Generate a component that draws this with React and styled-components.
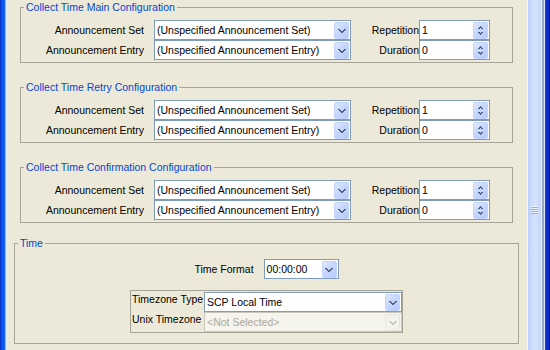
import React from "react";
import styled, { createGlobalStyle } from "styled-components";

const GlobalStyle = createGlobalStyle`
  html, body {
    margin: 0;
    padding: 0;
    background: #ece9d8;
  }
  body {
    font-family: "Liberation Sans", Arial, sans-serif;
    font-size: 10.5px;
    color: #000;
  }
`;

const Window = styled.div`
  width: 550px;
  height: 350px;
  display: flex;
  overflow: hidden;
  background: #ece9d8;
`;

const LeftFrame = styled.div`
  width: 7px;
  flex: none;
  background: linear-gradient(
    to right,
    #0a32c8 0 1px,
    #0656ec 1px 4px,
    #1b66f0 4px 5px,
    #8fb0f6 5px 6px,
    #e4ecfd 6px 7px
  );
`;

const RightFrame = styled.div`
  width: 5px;
  flex: none;
  background: linear-gradient(to right, #1240d8 0 1px, #0a2cc4 1px 4px, #001a9e 4px);
`;

const Content = styled.div`
  flex: 1;
  display: flex;
  flex-direction: column;
  min-width: 0;
`;

const Track = styled.div`
  width: 18px;
  flex: none;
  display: flex;
  background: #f6f8fd;
  padding-left: 1px;
  box-sizing: border-box;
`;

const Thumb = styled.div`
  width: 13px;
  display: flex;
  flex-direction: column;
  align-items: center;
  background: linear-gradient(to right, #bacefb 0%, #cddcfd 30%, #d6e2fe 60%, #c2d4fc 100%);
  border-right: 1px solid #e8effe;
`;

const Grip = styled.div`
  margin-top: 206px;
  width: 7px;
  height: 8px;
  background: repeating-linear-gradient(to bottom, #f0f5ff 0 1px, #8cacf4 1px 2px);
`;

const Rail = styled.div`
  width: 3px;
  background: linear-gradient(to right, #98a6c6 0 2px, #dfe7fb 2px 3px);
`;

const Group = styled.fieldset`
  margin: ${p => p.$first ? "0" : p.$gap + "px"} ${p => p.$right}px 0 ${p => p.$left}px;
  padding: ${p => p.$pt}px 0 ${p => p.$pb}px 0;
  border: 1px solid #a6a59a;
  min-width: 0;
`;

const Legend = styled.legend`
  margin-left: 3px;
  padding: 0 2px;
  line-height: 15px;
  height: 15px;
  color: #0046d5;
`;

const ConfigGrid = styled.div`
  display: grid;
  grid-template-columns: 133px 197px 68px 71px;
  grid-auto-rows: 20px;
  align-items: center;
`;

const Label = styled.span`
  text-align: ${p => p.$align || "right"};
  padding-right: ${p => p.$pr || 0}px;
  padding-left: ${p => p.$pl || 0}px;
  white-space: nowrap;
`;

const Combo = styled.div`
  width: ${p => p.$w}px;
  height: 20px;
  box-sizing: border-box;
  display: flex;
  padding: 1px 1px 0 0;
  border: 1px solid ${p => (p.$disabled ? "#c9c7ba" : "#7f9db9")};
  background: ${p => (p.$disabled ? "#f5f4ed" : "#fff")};
`;

const Value = styled.span`
  flex: 1;
  padding-left: 2px;
  line-height: 16px;
  white-space: nowrap;
  overflow: hidden;
  color: ${p => (p.$disabled ? "#aca899" : "#000")};
`;

const ArrowButton = styled.span`
  width: 15px;
  height: 17px;
  box-sizing: border-box;
  display: flex;
  flex-direction: column;
  align-items: center;
  justify-content: center;
  gap: 3px;
  border-radius: 2px;
  border: 1px solid ${p => (p.$disabled ? "#e6e5dd" : "#c3d3fc")};
  background: ${p =>
    p.$disabled
      ? "#f3f2ec"
      : "linear-gradient(135deg, #e0e9fe 0%, #c6d6fc 45%, #b7cbfa 100%)"};
`;

const TimeBody = styled.div`
  display: flex;
  flex-direction: column;
  align-items: center;
  gap: 11px;
`;

const FormatRow = styled.div`
  display: flex;
  align-items: center;
  gap: 10px;
`;

const ZonePanel = styled.div`
  display: grid;
  grid-template-columns: 73px 198px;
  grid-auto-rows: 20px;
  padding-top: 1px;
  border: 1px solid #a5a498;
`;

const ZoneLabel = styled.span`
  padding-left: 1px;
  line-height: 14px;
  white-space: nowrap;
  overflow: hidden;
`;

const Chevron = ({ color }) => (
  <svg width="8" height="4" viewBox="0 0 8 4" shapeRendering="crispEdges">
    <path fill={color} d="M0 0h2v1H0zM6 0h2v1H6zM1 1h2v1H1zM5 1h2v1H5zM2 2h4v1H2zM3 3h2v1H3z" />
  </svg>
);

const SpinArrow = ({ up }) => (
  <svg width="5" height="3" viewBox="0 0 5 3" shapeRendering="crispEdges">
    <path
      fill="#4d6185"
      d={up ? "M2 0h1v1H2zM1 1h3v1H1zM0 2h2v1H0zM3 2h2v1H3z" : "M0 0h2v1H0zM3 0h2v1H3zM1 1h3v1H1zM2 2h1v1H2z"}
    />
  </svg>
);

const ComboBox = ({ width, value, disabled }) => (
  <Combo $w={width} $disabled={disabled}>
    <Value $disabled={disabled}>{value}</Value>
    <ArrowButton $disabled={disabled}>
      <Chevron color={disabled ? "#c9c7ba" : "#4d6185"} />
    </ArrowButton>
  </Combo>
);

const Spinner = ({ value }) => (
  <Combo $w={71}>
    <Value>{value}</Value>
    <ArrowButton>
      <SpinArrow up />
      <SpinArrow />
    </ArrowButton>
  </Combo>
);

const ConfigGroup = ({ title, first }) => (
  <Group $first={first} $gap={17} $left={13} $right={14} $pt={5} $pb={2}>
    <Legend>{title}</Legend>
    <ConfigGrid>
      <Label $pr={10}>Announcement Set</Label>
      <ComboBox width={197} value="(Unspecified Announcement Set)" />
      <Label>Repetition</Label>
      <Spinner value="1" />
      <Label $pr={10}>Announcement Entry</Label>
      <ComboBox width={197} value="(Unspecified Announcement Entry)" />
      <Label>Duration</Label>
      <Spinner value="0" />
    </ConfigGrid>
  </Group>
);

export default function App() {
  return (
    <>
      <GlobalStyle />
      <Window>
        <LeftFrame />
        <Content>
          <ConfigGroup first title="Collect Time Main Configuration" />
          <ConfigGroup title="Collect Time Retry Configuration" />
          <ConfigGroup title="Collect Time Confirmation Configuration" />
          <Group $gap={13} $left={7} $right={8} $pt={8} $pb={10}>
            <Legend>Time</Legend>
            <TimeBody>
              <FormatRow>
                <Label>Time Format</Label>
                <ComboBox width={75} value="00:00:00" />
              </FormatRow>
              <ZonePanel>
                <ZoneLabel>Timezone Type</ZoneLabel>
                <ComboBox width={198} value="SCP Local Time" />
                <ZoneLabel>Unix Timezone</ZoneLabel>
                <ComboBox width={198} value="<Not Selected>" disabled />
              </ZonePanel>
            </TimeBody>
          </Group>
        </Content>
        <Track>
          <Thumb>
            <Grip />
          </Thumb>
          <Rail />
        </Track>
        <RightFrame />
      </Window>
    </>
  );
}
